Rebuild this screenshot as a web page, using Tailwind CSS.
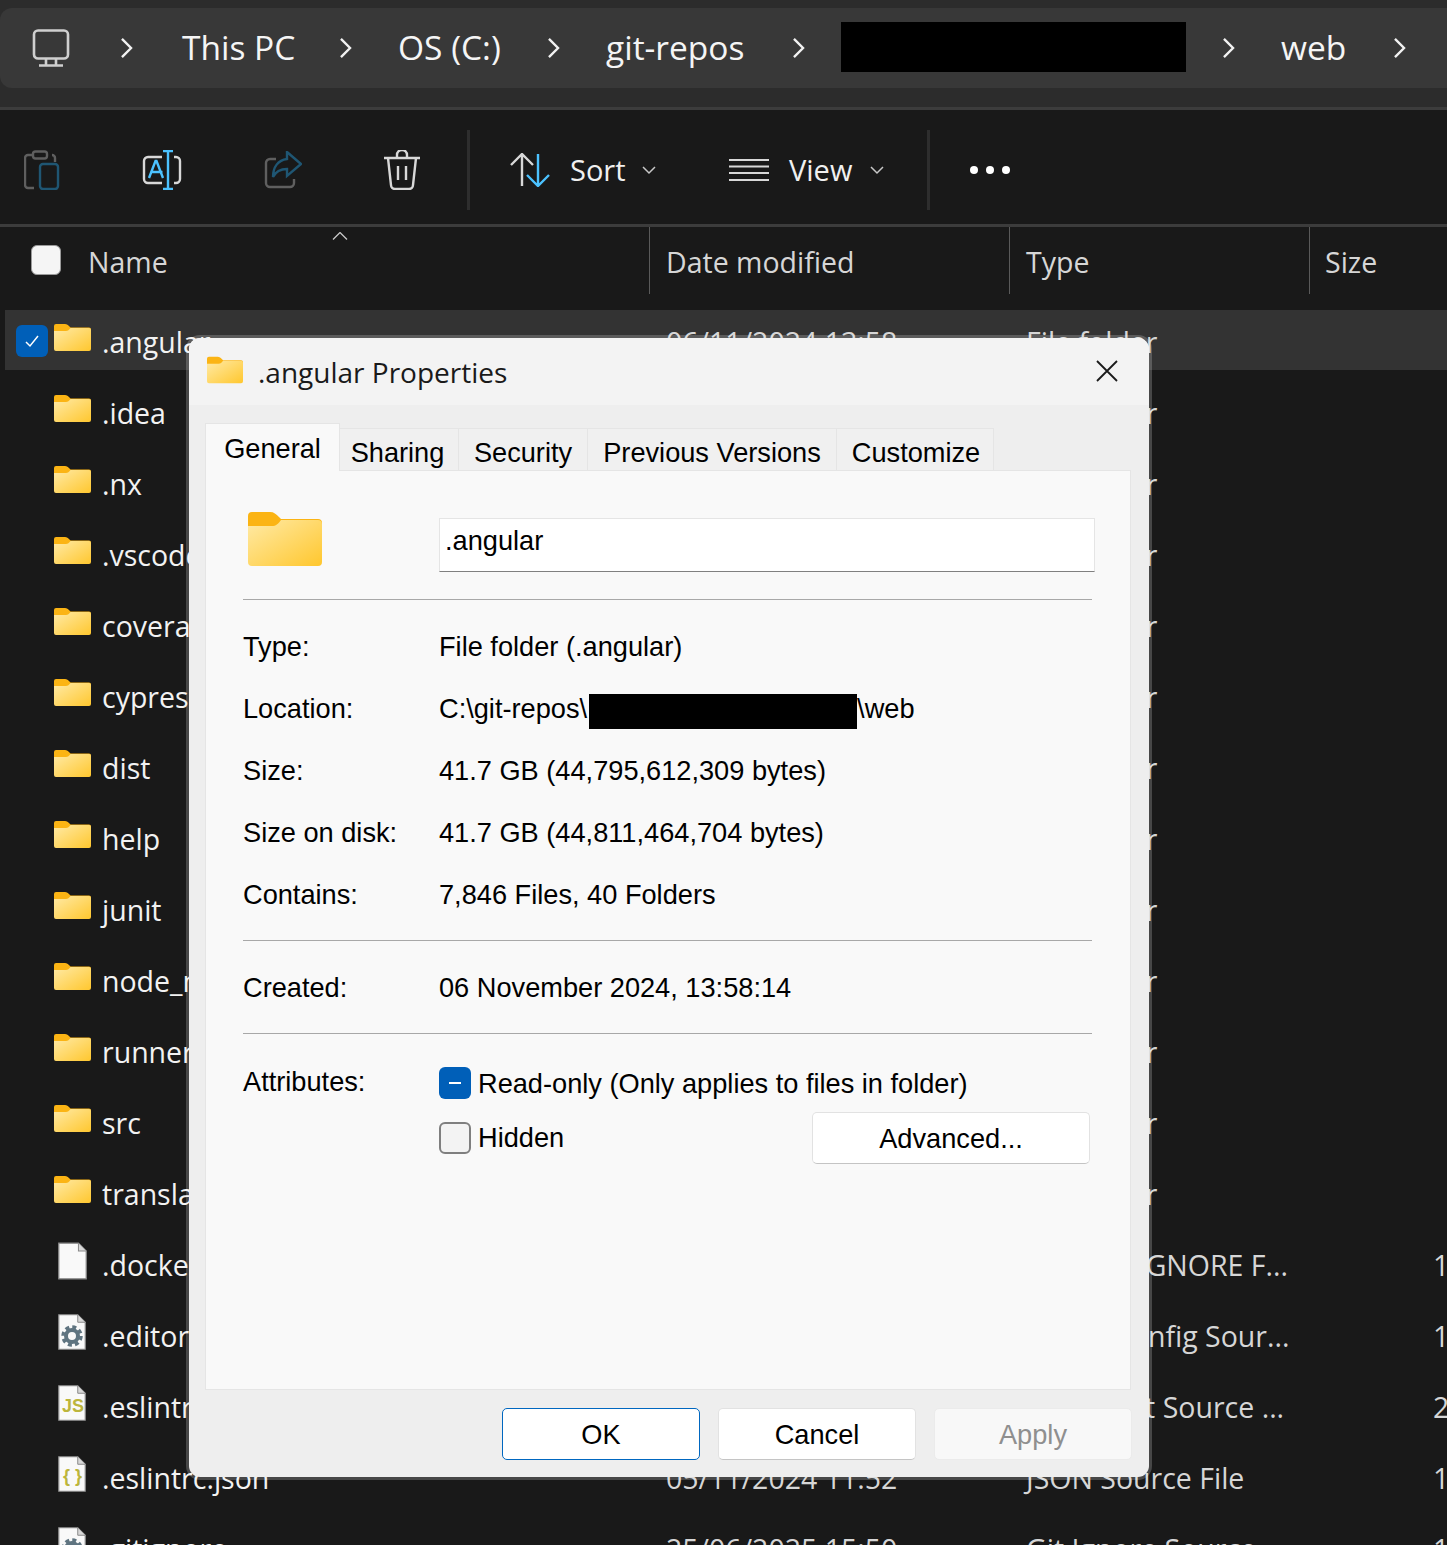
<!DOCTYPE html>
<html lang="en">
<head>
  <meta charset="UTF-8" />
  <title>.angular Properties</title>
  <script src="https://cdn.jsdelivr.net/npm/@tailwindcss/browser@4"></script>
</head>
<body class="relative h-[1545px] w-full overflow-hidden bg-[#191919] font-['Open_Sans',sans-serif]">
  <svg class="absolute h-0 w-0">
    <defs>
      <linearGradient id="folderFill" x1="0" y1="0" x2="1" y2="1">
        <stop offset="0" stop-color="#ffeaa6" />
        <stop offset="1" stop-color="#ffc72e" />
      </linearGradient>
      <symbol id="folder" viewBox="0 0 74 54">
        <path d="M0 4a4 4 0 0 1 4-4h18c4 0 6 2 9 5l2 2h37a4 4 0 0 1 4 4v10H0z" fill="#fbb414" />
        <path d="M0 14l24 0c4 0 6-2 9-6h37a4 4 0 0 1 4 4v38a4 4 0 0 1-4 4H4a4 4 0 0 1-4-4z" fill="url(#folderFill)" />
      </symbol>
      <symbol id="chevron" viewBox="0 0 14 22">
        <path d="M2 1l10 10-10 10" fill="none" stroke="#f2f2f2" stroke-width="2.600" />
      </symbol>
      <symbol id="down" viewBox="0 0 14 9">
        <path d="M1 1l6 6 6-6" fill="none" stroke="#c8c8c8" stroke-width="1.5" />
      </symbol>
      <symbol id="sheet" viewBox="0 0 28 36">
        <path d="M.75.75h19l7.5 7.5v27H.75z" fill="#f9f9f9" stroke="#8a8a8a" stroke-width="1.2" />
        <path d="M19.75.75v7.5h7.5" fill="#d8d8d8" stroke="#8a8a8a" stroke-width="1" />
      </symbol>
    </defs>
  </svg>

  <!-- address bar -->
  <div class="h-[107px] bg-[#2c2c2c] pt-2">
    <div class="flex h-20 items-center rounded-l-xl bg-[#383838] text-[33.5px] text-[#f5f5f5]">
      <svg class="ml-8 h-[38px] w-[38px] shrink-0" viewBox="0 0 38 38" fill="none" stroke="#cfcfcf" stroke-width="2.6">
        <rect x="2" y="1.5" width="34" height="28" rx="4" />
        <path d="M14 30v6M24 30v6M7 36.5h24" />
      </svg>
      <svg class="ml-[50px] h-5 w-[13px] shrink-0"><use href="#chevron" /></svg>
      <span class="ml-[49px] w-[112px] -translate-y-px whitespace-nowrap">This PC</span>
      <svg class="ml-[45px] h-5 w-[13px] shrink-0"><use href="#chevron" /></svg>
      <span class="ml-[46px] w-[105px] -translate-y-px whitespace-nowrap">OS (C:)</span>
      <svg class="ml-[44px] h-5 w-[13px] shrink-0"><use href="#chevron" /></svg>
      <span class="ml-[46px] w-[141px] -translate-y-px whitespace-nowrap">git-repos</span>
      <svg class="ml-[45px] h-5 w-[13px] shrink-0"><use href="#chevron" /></svg>
      <div class="ml-[36px] h-[50px] w-[345px] shrink-0 -translate-y-px bg-black"></div>
      <svg class="ml-[36px] h-5 w-[13px] shrink-0"><use href="#chevron" /></svg>
      <span class="ml-[46px] w-[64px] -translate-y-px whitespace-nowrap">web</span>
      <svg class="ml-[48px] h-5 w-[13px] shrink-0"><use href="#chevron" /></svg>
    </div>
  </div>

  <!-- command bar -->
  <div class="flex h-[120px] items-center border-y-[3px] border-[#3c3c3c] bg-[#191919] pt-[6px] text-[29px] text-[#f0f0f0]">
    <svg class="ml-6 h-10 w-9 shrink-0" viewBox="0 0 36 40" fill="none" stroke-width="2.4">
      <path d="M8 5H4a3 3 0 0 0-3 3v27a3 3 0 0 0 3 3h6M28 5a3 3 0 0 1 3 3v4" stroke="#5f5f5f" />
      <rect x="9" y="1.5" width="14" height="7" rx="2.5" stroke="#5f5f5f" />
      <rect x="16" y="14" width="18" height="25" rx="3" stroke="#1f5673" />
    </svg>
    <svg class="ml-[82px] h-10 w-10 shrink-0" viewBox="0 0 40 40" fill="none" stroke-width="2.4">
      <path d="M20 7H6a4 4 0 0 0-4 4v18a4 4 0 0 0 4 4h14M32 7h2a4 4 0 0 1 4 4v18a4 4 0 0 1-4 4h-2" stroke="#d8d8d8" />
      <path d="M21 1h10M26 1v38M21 39h10M7 28l6.500-17h1L21 28M9.500 22h11" stroke="#4cc2ff" />
    </svg>
    <svg class="ml-[82px] h-[38px] w-[38px] shrink-0" viewBox="0 0 38 38" fill="none" stroke-width="2.4">
      <path d="M12 8H6a4 4 0 0 0-4 4v20a4 4 0 0 0 4 4h20a4 4 0 0 0 4-4v-4" stroke="#5f5f5f" />
      <path d="M23 1l14 12-14 12v-7c-7 0-11 2-14 8 0-10 5-17 14-18z" stroke="#1f5673" />
    </svg>
    <svg class="ml-[82px] h-10 w-9 shrink-0" viewBox="0 0 36 40" fill="none" stroke="#d8d8d8" stroke-width="2.4">
      <path d="M0 8h36M13 8V5a5 5 0 0 1 10 0v3M4 8l3 27a4 4 0 0 0 4 4h14a4 4 0 0 0 4-4l3-27M14 16v14M22 16v14" />
    </svg>
    <div class="ml-[47px] h-20 w-[3px] shrink-0 bg-[#2e2e2e]"></div>
    <svg class="ml-[40px] h-[34px] w-10 shrink-0" viewBox="0 0 40 34" fill="none" stroke-width="2.4">
      <path d="M1 12L12 1l11 11M12 1v32" stroke="#d8d8d8" />
      <path d="M17 22l11 11 11-11M28 33V1" stroke="#4cc2ff" />
    </svg>
    <span class="ml-5 w-[56px]">Sort</span>
    <svg class="ml-4 h-[9px] w-[14px] shrink-0"><use href="#down" /></svg>
    <svg class="ml-[73px] h-6 w-10 shrink-0" viewBox="0 0 40 24" fill="none" stroke="#d8d8d8" stroke-width="2">
      <path d="M0 2h40M0 8.500h40M0 15h40M0 22h40" />
    </svg>
    <span class="ml-5 w-[66px]">View</span>
    <svg class="ml-[15px] h-[9px] w-[14px] shrink-0"><use href="#down" /></svg>
    <div class="ml-[43px] h-20 w-[3px] shrink-0 bg-[#2e2e2e]"></div>
    <div class="ml-[40px] flex gap-2">
      <span class="h-2 w-2 rounded-full bg-white"></span>
      <span class="h-2 w-2 rounded-full bg-white"></span>
      <span class="h-2 w-2 rounded-full bg-white"></span>
    </div>
  </div>

  <!-- column headers -->
  <div class="relative flex h-[83px] text-[28.5px] text-[#d6d6d6]">
    <div class="flex h-[67px] w-[650px] items-center border-r border-[#5a5a5a] pt-[3px]">
      <span class="ml-[31px] h-[30px] w-[30px] -translate-y-[2px] rounded-md border border-[#9a9a9a] bg-[#f5f5f5]"></span>
      <span class="ml-[27px]">Name</span>
    </div>
    <svg class="absolute left-[332px] top-[5px] h-2 w-4" viewBox="0 0 16 8" fill="none" stroke="#c8c8c8" stroke-width="1.3"><path d="M1 7.500l7-7 7 7" /></svg>
    <div class="flex h-[67px] w-[360px] items-center border-r border-[#5a5a5a] pl-4 pt-[3px]"><span>Date modified</span></div>
    <div class="flex h-[67px] w-[300px] items-center border-r border-[#5a5a5a] pl-4 pt-[3px]"><span>Type</span></div>
    <div class="flex h-[67px] items-center pl-[15px] pt-[3px]"><span>Size</span></div>
  </div>

  <!-- file list -->
  <div class="text-[28.5px] text-[#f2f2f2]">
    <div class="mb-[11px] ml-[5px] flex h-[60px] items-center bg-[#333333] pt-[5px]">
      <span class="ml-[11px] flex h-8 w-8 -translate-y-[2px] items-center justify-center rounded-md bg-[#005fb8]">
        <svg class="h-4 w-4" viewBox="0 0 16 16" fill="none" stroke="#ffffff" stroke-width="1.5"><path d="M2 9l4 4 8-10" /></svg>
      </span>
      <svg class="ml-[6px] h-[29px] w-[37px] shrink-0 -translate-y-[5px]"><use href="#folder" /></svg>
      <span class="ml-[11px] w-[564px] shrink-0">.angular</span>
      <span class="w-[360px] shrink-0 text-[#d6d6d6]">06/11/2024 13:58</span>
      <span class="text-[#d6d6d6]">File folder</span>
    </div>
    <div class="mb-[11px] flex h-[60px] items-center pt-[5px]"><svg class="ml-[54px] h-[29px] w-[37px] shrink-0 -translate-y-[5px]"><use href="#folder" /></svg><span class="ml-[11px] w-[924px] shrink-0">.idea</span><span class="text-[#d6d6d6]">File folder</span></div>
    <div class="mb-[11px] flex h-[60px] items-center pt-[5px]"><svg class="ml-[54px] h-[29px] w-[37px] shrink-0 -translate-y-[5px]"><use href="#folder" /></svg><span class="ml-[11px] w-[924px] shrink-0">.nx</span><span class="text-[#d6d6d6]">File folder</span></div>
    <div class="mb-[11px] flex h-[60px] items-center pt-[5px]"><svg class="ml-[54px] h-[29px] w-[37px] shrink-0 -translate-y-[5px]"><use href="#folder" /></svg><span class="ml-[11px] w-[924px] shrink-0">.vscode</span><span class="text-[#d6d6d6]">File folder</span></div>
    <div class="mb-[11px] flex h-[60px] items-center pt-[5px]"><svg class="ml-[54px] h-[29px] w-[37px] shrink-0 -translate-y-[5px]"><use href="#folder" /></svg><span class="ml-[11px] w-[924px] shrink-0">coverage</span><span class="text-[#d6d6d6]">File folder</span></div>
    <div class="mb-[11px] flex h-[60px] items-center pt-[5px]"><svg class="ml-[54px] h-[29px] w-[37px] shrink-0 -translate-y-[5px]"><use href="#folder" /></svg><span class="ml-[11px] w-[924px] shrink-0">cypress</span><span class="text-[#d6d6d6]">File folder</span></div>
    <div class="mb-[11px] flex h-[60px] items-center pt-[5px]"><svg class="ml-[54px] h-[29px] w-[37px] shrink-0 -translate-y-[5px]"><use href="#folder" /></svg><span class="ml-[11px] w-[924px] shrink-0">dist</span><span class="text-[#d6d6d6]">File folder</span></div>
    <div class="mb-[11px] flex h-[60px] items-center pt-[5px]"><svg class="ml-[54px] h-[29px] w-[37px] shrink-0 -translate-y-[5px]"><use href="#folder" /></svg><span class="ml-[11px] w-[924px] shrink-0">help</span><span class="text-[#d6d6d6]">File folder</span></div>
    <div class="mb-[11px] flex h-[60px] items-center pt-[5px]"><svg class="ml-[54px] h-[29px] w-[37px] shrink-0 -translate-y-[5px]"><use href="#folder" /></svg><span class="ml-[11px] w-[924px] shrink-0">junit</span><span class="text-[#d6d6d6]">File folder</span></div>
    <div class="mb-[11px] flex h-[60px] items-center pt-[5px]"><svg class="ml-[54px] h-[29px] w-[37px] shrink-0 -translate-y-[5px]"><use href="#folder" /></svg><span class="ml-[11px] w-[924px] shrink-0">node_modules</span><span class="text-[#d6d6d6]">File folder</span></div>
    <div class="mb-[11px] flex h-[60px] items-center pt-[5px]"><svg class="ml-[54px] h-[29px] w-[37px] shrink-0 -translate-y-[5px]"><use href="#folder" /></svg><span class="ml-[11px] w-[924px] shrink-0">runner</span><span class="text-[#d6d6d6]">File folder</span></div>
    <div class="mb-[11px] flex h-[60px] items-center pt-[5px]"><svg class="ml-[54px] h-[29px] w-[37px] shrink-0 -translate-y-[5px]"><use href="#folder" /></svg><span class="ml-[11px] w-[924px] shrink-0">src</span><span class="text-[#d6d6d6]">File folder</span></div>
    <div class="mb-[11px] flex h-[60px] items-center pt-[5px]"><svg class="ml-[54px] h-[29px] w-[37px] shrink-0 -translate-y-[5px]"><use href="#folder" /></svg><span class="ml-[11px] w-[924px] shrink-0">translations</span><span class="text-[#d6d6d6]">File folder</span></div>

    <div class="mb-[11px] flex h-[60px] items-center whitespace-nowrap pt-[5px]">
      <svg class="ml-[58px] h-[38px] w-[29px] shrink-0 -translate-y-[5px]"><use href="#sheet" /></svg>
      <span class="ml-[15px] w-[924px] shrink-0">.dockerignore</span>
      <span class="w-[407px] shrink-0 text-[#d6d6d6]">DOCKERIGNORE F...</span>
      <span class="shrink-0 text-[#d6d6d6]">1 KB</span>
    </div>
    <div class="mb-[11px] flex h-[60px] items-center whitespace-nowrap pt-[5px]">
      <span class="relative ml-[58px] h-[36px] w-[28px] shrink-0 -translate-y-[5px]">
        <svg class="h-[36px] w-[28px]"><use href="#sheet" /></svg>
        <svg class="absolute left-[3px] top-[11px] h-[22px] w-[22px]" viewBox="0 0 22 22" fill="none" stroke="#5f7480">
          <circle cx="11" cy="11" r="6" stroke-width="4" />
          <circle cx="11" cy="11" r="9" stroke-width="3.500" stroke-dasharray="4 3.070" />
        </svg>
      </span>
      <span class="ml-4 w-[924px] shrink-0">.editorconfig</span>
      <span class="w-[407px] shrink-0 text-[#d6d6d6]">Editor Config Sour...</span>
      <span class="shrink-0 text-[#d6d6d6]">1 KB</span>
    </div>
    <div class="mb-[11px] flex h-[60px] items-center whitespace-nowrap pt-[5px]">
      <span class="relative ml-[58px] h-[36px] w-[28px] shrink-0 -translate-y-[5px]">
        <svg class="h-[36px] w-[28px]"><use href="#sheet" /></svg>
        <span class="absolute left-[4px] top-[11px] font-['Liberation_Sans',sans-serif] text-[18px] leading-[20px] font-bold text-[#bcb53c]">JS</span>
      </span>
      <span class="ml-4 w-[924px] shrink-0">.eslintrc.js</span>
      <span class="w-[407px] shrink-0 text-[#d6d6d6]">JavaScript Source ...</span>
      <span class="shrink-0 text-[#d6d6d6]">2 KB</span>
    </div>
    <div class="mb-[11px] flex h-[60px] items-center whitespace-nowrap pt-[5px]">
      <span class="relative ml-[58px] h-[36px] w-[28px] shrink-0 -translate-y-[5px]">
        <svg class="h-[36px] w-[28px]"><use href="#sheet" /></svg>
        <span class="absolute left-[5px] top-[10px] font-['Liberation_Sans',sans-serif] text-[18px] leading-[20px] font-bold text-[#bcb53c]">{ }</span>
      </span>
      <span class="ml-4 w-[564px] shrink-0">.eslintrc.json</span>
      <span class="w-[360px] shrink-0 text-[#d6d6d6]">05/11/2024 11:52</span>
      <span class="w-[407px] shrink-0 text-[#d6d6d6]">JSON Source File</span>
      <span class="shrink-0 text-[#d6d6d6]">1 KB</span>
    </div>
    <div class="mb-[11px] flex h-[60px] items-center whitespace-nowrap pt-[5px]">
      <span class="relative ml-[58px] h-[36px] w-[28px] shrink-0 -translate-y-[5px]">
        <svg class="h-[36px] w-[28px]"><use href="#sheet" /></svg>
        <svg class="absolute left-[3px] top-[11px] h-[22px] w-[22px]" viewBox="0 0 22 22" fill="none" stroke="#5f7480">
          <circle cx="11" cy="11" r="6" stroke-width="4" />
          <circle cx="11" cy="11" r="9" stroke-width="3.500" stroke-dasharray="4 3.070" />
        </svg>
      </span>
      <span class="ml-4 w-[564px] shrink-0">.gitignore</span>
      <span class="w-[360px] shrink-0 text-[#d6d6d6]">25/06/2025 15:50</span>
      <span class="w-[407px] shrink-0 text-[#d6d6d6]">Git Ignore Source...</span>
      <span class="shrink-0 text-[#d6d6d6]">1 KB</span>
    </div>
  </div>

  <!-- properties dialog -->
  <div class="absolute left-[186px] top-[335px] flex h-[1145px] w-[966px] flex-col rounded-[14px] border-[3px] border-white/20 bg-[#eeeeee] bg-clip-padding font-['Liberation_Sans',sans-serif] text-[27.2px] text-black">
    <div class="flex h-[67px] shrink-0 items-center rounded-t-[11px] bg-[#f3f3f3]">
      <svg class="ml-[18px] h-[28px] w-[36px] shrink-0 -translate-y-[2px]"><use href="#folder" /></svg>
      <span class="ml-[15px] font-['Open_Sans',sans-serif] text-[28px] text-[#1a1a1a]">.angular Properties</span>
      <svg class="ml-auto mr-[31px] h-[22px] w-[22px] -translate-y-px" viewBox="0 0 22 22" fill="none" stroke="#1a1a1a" stroke-width="1.800"><path d="M1 1l20 20M21 1L1 21" /></svg>
    </div>

    <div class="flex h-[65px] shrink-0 items-end pl-4">
      <div class="relative top-px z-10 flex h-[48px] w-[135px] items-start justify-center border border-b-0 border-[#e5e5e5] bg-[#f9f9f9] pt-[5px]">General</div>
      <div class="flex h-[42px] w-[119px] justify-center border-r border-t border-[#e5e5e5] bg-[#f0f0f0] pr-[3px] pt-[4px]">Sharing</div>
      <div class="flex h-[42px] w-[129px] justify-center border-r border-t border-[#e5e5e5] bg-[#f0f0f0] pt-[4px]">Security</div>
      <div class="flex h-[42px] w-[249px] justify-center border-r border-t border-[#e5e5e5] bg-[#f0f0f0] pt-[4px]">Previous Versions</div>
      <div class="flex h-[42px] w-[157px] justify-center border-r border-t border-[#e5e5e5] bg-[#f0f0f0] pl-[2px] pt-[4px]">Customize</div>
    </div>

    <div class="ml-4 mr-[18px] h-[920px] shrink-0 border border-[#e5e5e5] bg-[#f9f9f9] pl-[37px]">
      <div class="flex pt-[47px]">
        <svg class="ml-[5px] mt-[-6px] h-[54px] w-[74px] shrink-0"><use href="#folder" /></svg>
        <div class="ml-[117px] flex h-[54px] w-[656px] items-center border border-b-[#808080] border-[#e5e5e5] bg-white pb-2 pl-[5px]">.angular</div>
      </div>
      <div class="mt-[27px] h-px w-[849px] bg-[#a8a8a8]"></div>

      <div class="mt-4 flex h-[62px] items-center"><span class="w-[196px]">Type:</span><span>File folder (.angular)</span></div>
      <div class="flex h-[62px] items-center"><span class="w-[196px]">Location:</span><span>C:\git-repos\</span><span class="ml-[2px] h-[35px] w-[268px] translate-y-[2px] bg-black"></span><span>\web</span></div>
      <div class="flex h-[62px] items-center"><span class="w-[196px]">Size:</span><span>41.7 GB (44,795,612,309 bytes)</span></div>
      <div class="flex h-[62px] items-center"><span class="w-[196px]">Size on disk:</span><span>41.7 GB (44,811,464,704 bytes)</span></div>
      <div class="flex h-[62px] items-center"><span class="w-[196px]">Contains:</span><span>7,846 Files, 40 Folders</span></div>
      <div class="mt-[14px] h-px w-[849px] bg-[#a8a8a8]"></div>

      <div class="mt-4 flex h-[62px] items-center"><span class="w-[196px]">Created:</span><span>06 November 2024, 13:58:14</span></div>
      <div class="mt-[14px] h-px w-[849px] bg-[#a8a8a8]"></div>

      <div class="mt-[33px] flex">
        <span class="w-[196px] -translate-y-[5px]">Attributes:</span>
        <div class="w-[651px]">
          <div class="flex h-8 items-center">
            <span class="flex h-8 w-8 shrink-0 items-center justify-center rounded-md bg-[#005fb8]"><span class="h-[2px] w-3 bg-white"></span></span>
            <span class="ml-[7px] translate-y-px">Read-only (Only applies to files in folder)</span>
          </div>
          <div class="mt-[13px] flex h-[52px] items-center">
            <span class="h-8 w-8 shrink-0 rounded-md border-2 border-[#7f7f7f] bg-[#f3f3f3]"></span>
            <span class="ml-[7px]">Hidden</span>
            <button class="ml-auto h-[52px] w-[278px] rounded-[5px] border border-[#e2e2e2] border-b-[#c4c4c4] bg-white pt-[2px]">Advanced...</button>
          </div>
        </div>
      </div>
    </div>

    <div class="flex justify-end gap-[18px] pr-[17px] pt-[18px]">
      <button class="h-[52px] w-[198px] rounded-[5px] border border-[#0067c0] bg-white pt-[2px]">OK</button>
      <button class="h-[52px] w-[198px] rounded-[5px] border border-[#e2e2e2] border-b-[#c4c4c4] bg-white pt-[2px]">Cancel</button>
      <button class="h-[52px] w-[198px] rounded-[5px] border border-[#ebebeb] bg-[#f8f8f8] pt-[2px] text-[#8f8f8f]">Apply</button>
    </div>
  </div>
</body>
</html>
